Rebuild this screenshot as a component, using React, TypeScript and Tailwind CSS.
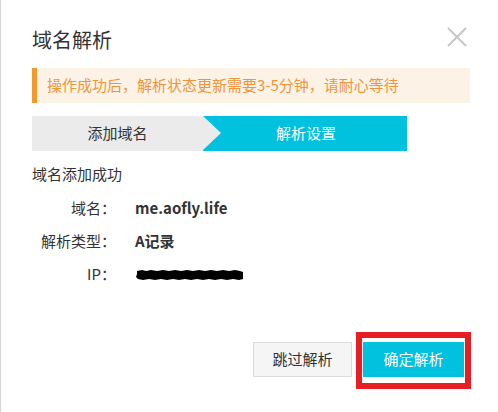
const Redacted = () => (
  <svg width="108" height="12" viewBox="0 0 108 12" className="block">
    <path
      d="M1 2 L6 1 L10 2 L15 1 L21 2 L27 1 L33 2 L39 1 L45 2 L51 1 L57 2 L63 1 L69 2 L75 1 L81 2 L87 1 L93 2 L99 1 L104 2 L107 3 L107 10 L103 11 L97 10 L91 11 L85 10 L79 11 L73 10 L67 11 L61 10 L55 11 L49 10 L43 11 L37 10 L31 11 L25 10 L19 11 L13 10 L7 11 L2 10 L0 8 L1 5 Z"
      fill="#000"
    />
  </svg>
);

export default function App() {
  return (
    <div
      className="w-[498px] h-[412px] bg-white border-l border-[#d4d4d4] pl-[31px] pr-[28px] pt-[26px] text-[#333]"
      style={{ fontFamily: '"Noto Sans CJK SC", "Liberation Sans", sans-serif' }}
    >
      <div className="flex justify-between items-start h-[42px]">
        <div className="text-[20px] leading-[28px] text-[#333]">域名解析</div>
        <svg width="20" height="20" viewBox="0 0 20 20" className="mr-[3px] mt-[1px]">
          <path d="M1 1 L19 19 M19 1 L1 19" stroke="#c6c6c6" strokeWidth="2" />
        </svg>
      </div>

      <div className="h-[35px] flex items-center bg-[#fdf2e6] border-l-[5px] border-[#f39a2e] pl-[10px] text-[15px] text-[#f0953a]">
        操作成功后，解析状态更新需要3-5分钟，请耐心等待
      </div>

      <div className="mt-[13px] h-[35px] w-[375px] flex text-[15px]">
        <div className="w-[171px] bg-[#ebebeb] flex items-center justify-center text-[#333]">添加域名</div>
        <div className="relative flex-1 bg-[#00c1de] flex items-center justify-center text-white">
          <div className="absolute left-0 top-0 w-0 h-0 border-l-[18px] border-l-[#ebebeb] border-y-[17.5px] border-y-transparent"></div>
          <span className="ml-[2px]">解析设置</span>
        </div>
      </div>

      <div className="mt-[12px] text-[15px] leading-[22px]">域名添加成功</div>

      <div className="mt-[7px] text-[15px]">
        <div className="flex items-center h-[33px]">
          <div className="w-[84px] text-right">域名：</div>
          <div className="ml-[19px] font-bold">me.aofly.life</div>
        </div>
        <div className="flex items-center h-[33px]">
          <div className="w-[84px] text-right">解析类型：</div>
          <div className="ml-[19px] font-bold">A记录</div>
        </div>
        <div className="flex items-center h-[33px]">
          <div className="w-[84px] text-right">IP：</div>
          <div className="ml-[20px]">
            <Redacted />
          </div>
        </div>
      </div>

      <div className="mt-[51px] flex justify-end gap-[11px] pr-[6px] text-[15px]">
        <button className="w-[99px] h-[35px] bg-[#f5f5f5] border border-[#dcdcdc] text-[#333]">跳过解析</button>
        <div className="relative">
          <button className="w-[101px] h-[35px] bg-[#00c1de] text-white">确定解析</button>
          <div className="absolute -left-[7px] -right-[7px] -top-[10px] -bottom-[12px] border-[6px] border-[#e81e25]"></div>
        </div>
      </div>
    </div>
  );
}
